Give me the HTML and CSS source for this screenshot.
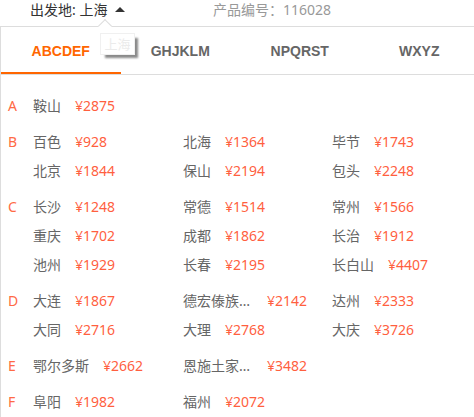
FILE: index.html
```html
<!DOCTYPE html>
<html>
<head>
  <meta charset="utf-8">
  <title>出发地选择</title>
  <link rel="stylesheet" href="styles.css">
</head>
<body>
  <div class="top-bar">
    <span class="from">出发地: 上海 <i class="caret"></i></span>
    <span class="code">产品编号：116028</span>
  </div>

  <div class="city-panel">
    <span class="notch"></span>
    <span class="hint">上海</span>

    <ul class="tabs">
      <li class="active">ABCDEF</li>
      <li>GHJKLM</li>
      <li>NPQRST</li>
      <li>WXYZ</li>
    </ul>

    <div class="city-list">
      <div class="group">
        <span class="letter">A</span>
        <div class="cities">
          <a class="city"><span class="name">鞍山</span><span class="price">¥2875</span></a>
        </div>
      </div>
      <div class="group">
        <span class="letter">B</span>
        <div class="cities">
          <a class="city"><span class="name">百色</span><span class="price">¥928</span></a>
          <a class="city"><span class="name">北海</span><span class="price">¥1364</span></a>
          <a class="city"><span class="name">毕节</span><span class="price">¥1743</span></a>
          <a class="city"><span class="name">北京</span><span class="price">¥1844</span></a>
          <a class="city"><span class="name">保山</span><span class="price">¥2194</span></a>
          <a class="city"><span class="name">包头</span><span class="price">¥2248</span></a>
        </div>
      </div>
      <div class="group">
        <span class="letter">C</span>
        <div class="cities">
          <a class="city"><span class="name">长沙</span><span class="price">¥1248</span></a>
          <a class="city"><span class="name">常德</span><span class="price">¥1514</span></a>
          <a class="city"><span class="name">常州</span><span class="price">¥1566</span></a>
          <a class="city"><span class="name">重庆</span><span class="price">¥1702</span></a>
          <a class="city"><span class="name">成都</span><span class="price">¥1862</span></a>
          <a class="city"><span class="name">长治</span><span class="price">¥1912</span></a>
          <a class="city"><span class="name">池州</span><span class="price">¥1929</span></a>
          <a class="city"><span class="name">长春</span><span class="price">¥2195</span></a>
          <a class="city"><span class="name">长白山</span><span class="price">¥4407</span></a>
        </div>
      </div>
      <div class="group">
        <span class="letter">D</span>
        <div class="cities">
          <a class="city"><span class="name">大连</span><span class="price">¥1867</span></a>
          <a class="city"><span class="name">德宏傣族景颇族自治州</span><span class="price">¥2142</span></a>
          <a class="city"><span class="name">达州</span><span class="price">¥2333</span></a>
          <a class="city"><span class="name">大同</span><span class="price">¥2716</span></a>
          <a class="city"><span class="name">大理</span><span class="price">¥2768</span></a>
          <a class="city"><span class="name">大庆</span><span class="price">¥3726</span></a>
        </div>
      </div>
      <div class="group">
        <span class="letter">E</span>
        <div class="cities">
          <a class="city"><span class="name">鄂尔多斯</span><span class="price">¥2662</span></a>
          <a class="city"><span class="name">恩施土家族苗族自治州</span><span class="price">¥3482</span></a>
        </div>
      </div>
      <div class="group">
        <span class="letter">F</span>
        <div class="cities">
          <a class="city"><span class="name">阜阳</span><span class="price">¥1982</span></a>
          <a class="city"><span class="name">福州</span><span class="price">¥2072</span></a>
        </div>
      </div>
    </div>
  </div>
</body>
</html>
```

FILE: styles.css
```css
body {
  margin: 0;
  overflow: hidden;
  background-color: #fff;
  font-family: "Noto Sans", "Noto Sans CJK SC", sans-serif;
  font-size: 14px;
  color: #333;
}

/* header line */
.top-bar {
  display: flex;
  height: 26px;
  line-height: 19px;
  padding-left: 30px;
  white-space: nowrap;
}

.from {
  color: #333;
}

.caret {
  display: inline-block;
  width: 0;
  height: 0;
  margin-left: 4px;
  vertical-align: 3px;
  border-left: 5px solid transparent;
  border-right: 5px solid transparent;
  border-bottom: 5px solid #333;
}

.code {
  margin-left: 88px;
  color: #999;
}

/* dropdown panel */
.city-panel {
  position: relative;
  width: 490px;
  border-top: 1px solid #ddd;
  border-left: 1px solid #ddd;
  background-color: #fff;
}

.notch {
  position: absolute;
  top: -6px;
  left: 99px;
  width: 9px;
  height: 9px;
  background-color: #fff;
  border-top: 1px solid #ddd;
  border-left: 1px solid #ddd;
  transform: rotate(45deg);
}

.hint {
  position: absolute;
  top: 6px;
  left: 99px;
  width: 33px;
  height: 20px;
  line-height: 20px;
  text-align: center;
  font-size: 13px;
  color: #ebebeb;
  background-color: #fff;
  border: 1px solid #f0f0f0;
  box-shadow: 4px 4px 2px -1px #8a8a8a;
  z-index: 2;
}

.tabs {
  display: flex;
  margin: 0;
  padding: 0;
  list-style: none;
  border-bottom: 1px solid #ddd;
}

.tabs li {
  width: 119.5px;
  height: 47px;
  line-height: 49px;
  text-align: center;
  font-family: "Liberation Sans", Arial, sans-serif;
  font-size: 14px;
  font-weight: bold;
  color: #666;
}

.tabs li.active {
  color: #ff6600;
  box-shadow: inset 0 -2px 0 #ff6600;
}

/* city rows */
.city-list {
  padding-top: 16px;
  padding-bottom: 10px;
}

.group {
  display: flex;
  margin-bottom: 7px;
}

.letter {
  width: 25px;
  padding-left: 7px;
  line-height: 29px;
  color: #ff6a45;
}

.cities {
  display: grid;
  grid-template-columns: 150px 149px 150px;
}

.city {
  display: flex;
  height: 29px;
  line-height: 29px;
  white-space: nowrap;
}

.name {
  max-width: 70px;
  overflow: hidden;
  text-overflow: ellipsis;
  color: #666;
}

.price {
  margin-left: 14px;
  color: #ff5f3f;
}
```
